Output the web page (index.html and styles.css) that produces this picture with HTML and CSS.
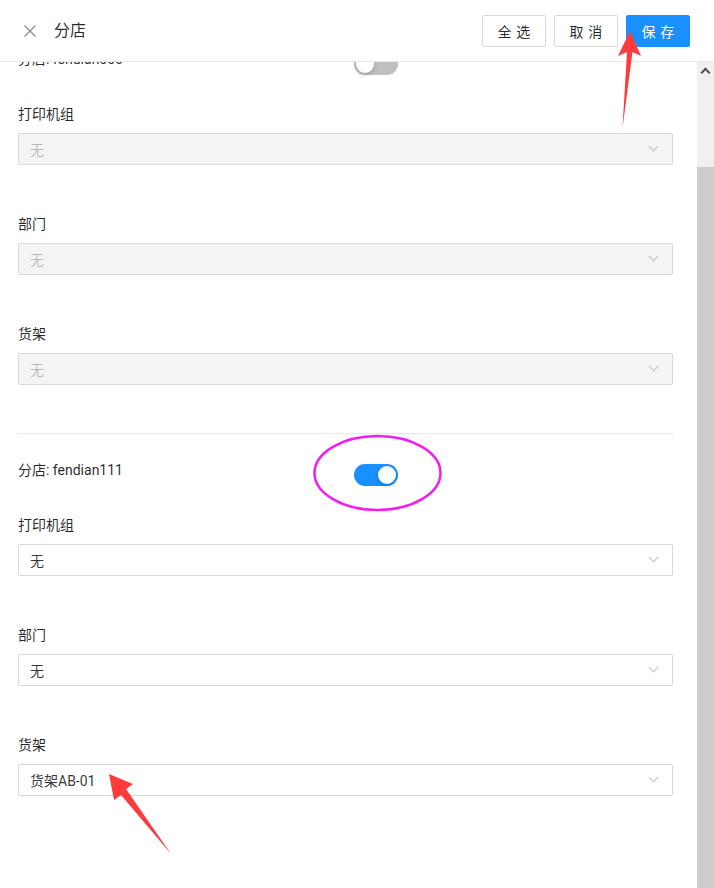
FILE: index.html
```html
<!DOCTYPE html>
<html lang="zh-CN">
<head>
    <meta charset="UTF-8">
    <meta name="viewport" content="width=device-width, initial-scale=1.0">
    <title>分店</title>
    <link rel="stylesheet" href="styles.css">
</head>
<body>
    <div class="drawer">
        <div class="drawer-header">
            <svg class="close-icon" width="12" height="12" viewBox="0 0 12 12">
                <path d="M0.5 0.5 L11.5 11.5 M11.5 0.5 L0.5 11.5" stroke="#8c8c8c" stroke-width="1.3" fill="none"/>
            </svg>
            <div class="drawer-title">分店</div>
            <div class="header-actions">
                <button class="btn">全选</button>
                <button class="btn">取消</button>
                <button class="btn btn-primary">保存</button>
            </div>
        </div>

        <div class="drawer-body">
            <div class="content">
                <div class="groups">
                    <!-- shop fendian000 (scrolled partly out of view) -->
                    <div class="group">
                        <div class="group-row">
                            <div class="row-label">分店: fendian000</div>
                            <span class="switch"></span>
                        </div>
                        <div class="field">
                            <div class="field-label">打印机组</div>
                            <div class="select disabled"><span>无</span><i class="arrow"></i></div>
                        </div>
                        <div class="field">
                            <div class="field-label">部门</div>
                            <div class="select disabled"><span>无</span><i class="arrow"></i></div>
                        </div>
                        <div class="field">
                            <div class="field-label">货架</div>
                            <div class="select disabled"><span>无</span><i class="arrow"></i></div>
                        </div>
                    </div>

                    <!-- shop fendian111 -->
                    <div class="group">
                        <div class="group-row">
                            <div class="row-label">分店: fendian111</div>
                            <span class="switch on"></span>
                        </div>
                        <div class="field">
                            <div class="field-label">打印机组</div>
                            <div class="select"><span>无</span><i class="arrow"></i></div>
                        </div>
                        <div class="field">
                            <div class="field-label">部门</div>
                            <div class="select"><span>无</span><i class="arrow"></i></div>
                        </div>
                        <div class="field">
                            <div class="field-label">货架</div>
                            <div class="select"><span>货架AB-01</span><i class="arrow"></i></div>
                        </div>
                    </div>
                </div>
            </div>

            <div class="scrollbar">
                <div class="scroll-up"></div>
                <div class="scroll-gap"></div>
                <div class="scroll-thumb"></div>
            </div>
        </div>
    </div>

    <!-- annotation marks drawn over the screenshot -->
    <svg class="marks" width="714" height="888" viewBox="0 0 714 888">
        <ellipse cx="377.5" cy="473" rx="63" ry="37" fill="none" stroke="#f01ef0" stroke-width="2.5"/>
        <polygon points="630,31 641,56 632.5,52 622.5,128 627,52 618,56" fill="#ff3a3a"/>
        <polygon points="109,774 133,784 126,789 171,854 121,795 114,800" fill="#ff3a3a"/>
    </svg>
</body>
</html>
```

FILE: styles.css
```css
* {
    box-sizing: border-box;
}

html, body {
    margin: 0;
    height: 100%;
    overflow: hidden;
}

body {
    font-family: Roboto, 'Noto Sans CJK SC', sans-serif;
    font-size: 14px;
    color: rgba(0, 0, 0, 0.65);
    background-color: #fff;
    position: relative;
}

.drawer {
    display: flex;
    flex-direction: column;
    height: 100%;
}

.drawer-header {
    display: flex;
    align-items: center;
    height: 62px;
    padding: 0 24px;
    border-bottom: 1px solid #e8e8e8;
    flex-shrink: 0;
}

.close-icon {
    margin-right: 18px;
}

.drawer-title {
    font-size: 16px;
    color: rgba(0, 0, 0, 0.85);
    line-height: 22px;
}

.header-actions {
    margin-left: auto;
    display: flex;
    gap: 8px;
}

.btn {
    width: 64px;
    height: 32px;
    padding: 0;
    font-family: inherit;
    font-size: 14px;
    letter-spacing: 0.34em;
    text-indent: 0.34em;
    color: rgba(0, 0, 0, 0.85);
    background-color: #fff;
    border: 1px solid #d9d9d9;
    border-radius: 2px;
    cursor: pointer;
}

.btn-primary {
    color: #fff;
    background-color: #1890ff;
    border-color: #1890ff;
}

.drawer-body {
    flex: 1;
    display: flex;
    min-height: 0;
}

.content {
    flex: 1;
    overflow: hidden;
    padding: 0 24px 0 18px;
}

/* list is scrolled down a little */
.groups {
    margin-top: -39px;
}

.group {
    padding: 25px 0 48px;
}

.group + .group {
    border-top: 1px solid #e8e8e8;
}

.group-row {
    display: flex;
    align-items: flex-start;
    height: 27px;
}

.row-label {
    width: 336px;
    line-height: 22px;
    color: rgba(0, 0, 0, 0.85);
}

.switch {
    position: relative;
    width: 44px;
    height: 22px;
    margin-top: 5px;
    border-radius: 11px;
    background-color: #bfbfbf;
}

.switch::after {
    content: '';
    position: absolute;
    top: 2px;
    left: 2px;
    width: 18px;
    height: 18px;
    border-radius: 50%;
    background-color: #fff;
    box-shadow: 0 2px 4px rgba(0, 35, 11, 0.2);
}

.switch.on {
    background-color: #1890ff;
}

.switch.on::after {
    left: 24px;
}

.field {
    margin-top: 48px;
}

.group-row + .field {
    margin-top: 28px;
}

.field-label {
    line-height: 22px;
    margin-bottom: 8px;
    color: rgba(0, 0, 0, 0.85);
}

.select {
    display: flex;
    align-items: center;
    height: 32px;
    padding: 0 11px;
    border: 1px solid #d9d9d9;
    border-radius: 2px;
    background-color: #fff;
    color: rgba(0, 0, 0, 0.8);
}

.select.disabled {
    background-color: #f4f4f4;
    color: rgba(0, 0, 0, 0.25);
}

.select .arrow {
    margin-left: auto;
    width: 7px;
    height: 7px;
    margin-right: 4px;
    margin-top: -5px;
    border-right: 1px solid #bfbfbf;
    border-bottom: 1px solid #bfbfbf;
    transform: rotate(45deg);
}

.scrollbar {
    width: 17px;
    display: flex;
    flex-direction: column;
    background-color: #f0f0f0;
    flex-shrink: 0;
}

.scroll-up {
    height: 17px;
    position: relative;
}

.scroll-up::after {
    content: '';
    position: absolute;
    left: 5px;
    top: 7px;
    width: 5px;
    height: 5px;
    border-left: 2px solid #505050;
    border-top: 2px solid #505050;
    transform: rotate(45deg);
}

.scroll-gap {
    height: 88px;
}

.scroll-thumb {
    flex: 1;
    background-color: #cdcdcd;
}

.marks {
    position: absolute;
    top: 0;
    left: 0;
    pointer-events: none;
}
```
